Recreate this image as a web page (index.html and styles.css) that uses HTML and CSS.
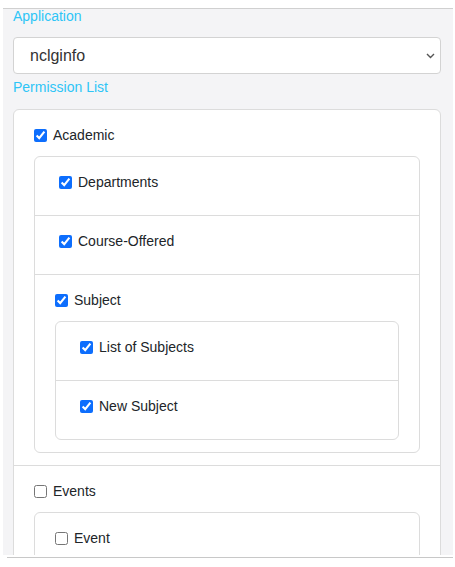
FILE: index.html
```html
<!DOCTYPE html>
<html lang="en">
<head>
    <meta charset="UTF-8">
    <meta name="viewport" content="width=device-width, initial-scale=1.0">
    <title>Permissions</title>
    <link rel="stylesheet" href="styles.css">
</head>
<body>
    <div class="panel">
        <label class="field-label" for="app">Application</label>
        <div class="select-wrap">
            <select id="app" class="app-select">
                <option>nclginfo</option>
            </select>
            <svg class="chevron" width="9" height="6" viewBox="0 0 9 6">
                <path d="M1 1l3.5 3.5L8 1" fill="none" stroke="#555" stroke-width="1.4"/>
            </svg>
        </div>
        <div class="field-label perm-label">Permission List</div>

        <!-- arbre des permissions -->
        <ul class="perm-list">
            <li class="perm-item">
                <label class="perm-check"><input type="checkbox" checked> Academic</label>
                <ul class="perm-list">
                    <li class="perm-item leaf">
                        <label class="perm-check"><input type="checkbox" checked> Departments</label>
                    </li>
                    <li class="perm-item leaf">
                        <label class="perm-check"><input type="checkbox" checked> Course-Offered</label>
                    </li>
                    <li class="perm-item">
                        <label class="perm-check"><input type="checkbox" checked> Subject</label>
                        <ul class="perm-list">
                            <li class="perm-item leaf">
                                <label class="perm-check"><input type="checkbox" checked> List of Subjects</label>
                            </li>
                            <li class="perm-item leaf">
                                <label class="perm-check"><input type="checkbox" checked> New Subject</label>
                            </li>
                        </ul>
                    </li>
                </ul>
            </li>
            <li class="perm-item">
                <label class="perm-check"><input type="checkbox"> Events</label>
                <ul class="perm-list">
                    <li class="perm-item tall">
                        <label class="perm-check"><input type="checkbox"> Event</label>
                    </li>
                </ul>
            </li>
        </ul>
    </div>
    <div class="bottom-line"></div>
</body>
</html>
```

FILE: styles.css
```css
body {
    margin: 0;
    font-family: "Liberation Sans", Arial, sans-serif;
    font-size: 14px;
    color: #212529;
    background: #fff;
}

.panel {
    margin: 8px 2px 0 3px;
    height: 546px;
    overflow: hidden;
    border-top: 1px solid #d0d0d0;
    background-color: #f4f4f6;
    padding: 0 12px 0 10px;
}

.field-label {
    display: block;
    color: #2ec5f6;
    line-height: 14px;
}

.select-wrap {
    position: relative;
    margin-top: 14px;
}

.app-select {
    display: block;
    width: 100%;
    height: 37px;
    padding: 0 30px 0 16px;
    border: 1px solid #d3d3d3;
    border-radius: 4px;
    background: #fff;
    font-family: inherit;
    font-size: 16px;
    color: #333;
    appearance: none;
    -webkit-appearance: none;
}

.chevron {
    position: absolute;
    right: 6px;
    top: 16px;
}

.perm-label {
    margin-top: 6px;
    margin-bottom: 15px;
}

.perm-list {
    list-style: none;
    margin: 0;
    padding: 0;
    background: #fff;
    border: 1px solid #dcdcdc;
    border-radius: 6px;
}

.perm-item {
    padding: 12px 20px;
    border-bottom: 1px solid #dcdcdc;
}

.perm-item:last-child {
    border-bottom: none;
}

.perm-item.tall {
    height: 80px;
}

.perm-check {
    display: flex;
    align-items: center;
    height: 26px;
    margin-bottom: 8px;
}

.perm-check input {
    margin: 0 6px 0 0;
    width: 13px;
    height: 13px;
    accent-color: #0d6efd;
}

.leaf .perm-check {
    padding-left: 4px;
}

.bottom-line {
    margin: 2px 2px 0 7px;
    height: 1px;
    background: #c8c8c8;
}
```
